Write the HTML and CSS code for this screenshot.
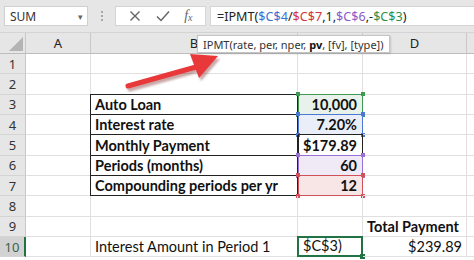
FILE: index.html
```html
<!DOCTYPE html>
<html>
<head>
<meta charset="utf-8">
<link rel="stylesheet" href="styles.css">
</head>
<body>
<div class="app">
  <div class="topbar">
    <div class="namebox"><span>SUM</span><span class="caret">&#9662;</span></div>
    <div class="grip"><i></i><i></i><i></i></div>
    <div class="fbtns">
      <svg class="ic" width="14" height="14" viewBox="0 0 14 14"><path d="M2.5 2.5 L11.5 11.5 M11.5 2.5 L2.5 11.5" stroke="#666" stroke-width="1.4" fill="none"/></svg>
      <svg class="ic" width="16" height="14" viewBox="0 0 16 14"><path d="M2 7.5 L6 11.5 L14 2.5" stroke="#666" stroke-width="1.5" fill="none"/></svg>
      <span class="fx">f<sub>x</sub></span>
    </div>
    <div class="fbar">=IPMT(<span class="cb">$C$4</span>/<span class="cr">$C$7</span>,1,<span class="cp">$C$6</span>,-<span class="cg">$C$3</span>)</div>
  </div>
  <div class="sheet">
    <div class="corner"><svg width="14" height="14" viewBox="0 0 14 14"><path d="M14 0 L14 14 L0 14 Z" fill="#b4b4b4"/></svg></div>
    <div class="ch">A</div><div class="ch">B</div><div class="ch"></div><div class="ch">D</div><div class="ch last"></div>

    <div class="rh">1</div><div class="c"></div><div class="c"></div><div class="c"></div><div class="c"></div><div class="c e"></div>
    <div class="rh">2</div><div class="c"></div><div class="c"></div><div class="c"></div><div class="c"></div><div class="c e"></div>
    <div class="rh">3</div><div class="c"></div><div class="c bx top b">Auto Loan</div><div class="c v g b r">10,000<i class="k k1"></i><i class="k k2"></i><i class="k k3"></i><i class="k k4"></i></div><div class="c"></div><div class="c e"></div>
    <div class="rh">4</div><div class="c"></div><div class="c bx b">Interest rate</div><div class="c v bl b r">7.20%<i class="k k1"></i><i class="k k2"></i><i class="k k3"></i><i class="k k4"></i></div><div class="c"></div><div class="c e"></div>
    <div class="rh">5</div><div class="c"></div><div class="c bx b">Monthly Payment</div><div class="c v bk b r">$179.89</div><div class="c"></div><div class="c e"></div>
    <div class="rh">6</div><div class="c"></div><div class="c bx b">Periods (months)</div><div class="c v pu b r">60<i class="k k1"></i><i class="k k2"></i><i class="k k3"></i><i class="k k4"></i></div><div class="c"></div><div class="c e"></div>
    <div class="rh">7</div><div class="c"></div><div class="c bx b">Compounding periods per yr</div><div class="c v rd b r">12<i class="k k1"></i><i class="k k2"></i><i class="k k3"></i><i class="k k4"></i></div><div class="c"></div><div class="c e"></div>
    <div class="rh">8</div><div class="c"></div><div class="c"></div><div class="c"></div><div class="c"></div><div class="c e"></div>
    <div class="rh">9</div><div class="c"></div><div class="c"></div><div class="c"></div><div class="c b ov">Total Payment</div><div class="c e"></div>
    <div class="rh act">10</div><div class="c"></div><div class="c">Interest Amount in Period 1</div><div class="c edit">$C$3)<i class="k k4 kg"></i></div><div class="c r">$239.89</div><div class="c e"></div>

    <div class="tip">IPMT(rate, per, nper,&nbsp;<b>pv</b>, [fv], [type])</div>
    <svg class="arrow" width="110" height="45" viewBox="0 0 110 45">
      <defs><filter id="sh" x="-20%" y="-40%" width="140%" height="180%"><feGaussianBlur stdDeviation="1.2"/></filter></defs>
      <g transform="translate(2,3)" opacity="0.35" filter="url(#sh)">
        <path d="M4 38 L72 19" stroke="#600" stroke-width="5" stroke-linecap="round"/>
        <path d="M66 6 L94 8 L75 30 Z" fill="#600"/>
      </g>
      <path d="M4 38 L72 19" stroke="#e8383a" stroke-width="5" stroke-linecap="round"/>
      <path d="M66 6 L94 8 L75 30 Z" fill="#e8383a"/>
    </svg>
  </div>
</div>
</body>
</html>
```
FILE: styles.css
```css
* { box-sizing: border-box; }
html, body { margin: 0; padding: 0; background: #fff; }
.app { width: 474px; height: 260px; overflow: hidden; font-family: "Noto Sans", "Open Sans", sans-serif; }

.topbar { height: 33px; background: #e6e6e6; display: flex; align-items: center; padding: 0 0 0 4px; border-bottom: 1px solid #d4d4d4; }
.namebox { width: 84px; height: 20px; background: #fff; border: 1px solid #d0d0d0; display: flex; align-items: center; justify-content: space-between; padding: 0 4px 0 5px; font-size: 12px; color: #333; }
.caret { font-size: 9px; color: #666; }
.grip { width: 27px; display: flex; flex-direction: column; align-items: center; gap: 2px; }
.grip i { width: 2px; height: 2px; background: #a8a8a8; display: block; }
.fbtns { width: 91px; height: 20px; background: #fff; border: 1px solid #d4d4d4; display: flex; align-items: center; justify-content: space-around; padding: 0 6px; }
.fx { font-family: "Liberation Serif", serif; font-style: italic; font-size: 14px; color: #666; line-height: 1; }
.fx sub { font-size: 10px; vertical-align: -1px; }
.fbar { flex: 1; margin-left: 4px; height: 20px; background: #fff; border: 1px solid #d4d4d4; border-right: none; display: flex; align-items: center; padding-left: 6px; font-size: 12.6px; color: #222; white-space: nowrap; }
.cb { color: #3d6fd0; }
.cr { color: #d0373c; }
.cp { color: #8a5bc8; }
.cg { color: #2f8f4a; }

.sheet { position: relative; display: grid; grid-template-columns: 26px 65px 207px 65px 104px 7px; grid-template-rows: 21px repeat(10, 20.33px); font-family: "Lato", "Liberation Sans", sans-serif; font-size: 14.5px; color: #111; }
.corner { background: #e6e6e6; border-right: 1px solid #c8c8c8; border-bottom: 1px solid #bdbdbd; display: flex; align-items: flex-end; justify-content: flex-end; padding: 0 2px 2px 0; }
.ch { background: #e6e6e6; border-right: 1px solid #c8c8c8; border-bottom: 1px solid #bdbdbd; display: flex; align-items: center; justify-content: center; font-family: "Noto Sans", sans-serif; font-size: 13px; color: #222; }
.ch.last { border-right: none; }
.rh { background: #e6e6e6; border-right: 1px solid #c8c8c8; border-bottom: 1px solid #d4d4d4; display: flex; align-items: center; justify-content: center; font-family: "Noto Sans", sans-serif; font-size: 13px; color: #333; }
.rh.act { background: #d2d2d2; border-right: 2px solid #217346; color: #3d5f4a; }
.c { position: relative; border-right: 1px solid #e0e0e0; border-bottom: 1px solid #e0e0e0; display: flex; align-items: flex-end; padding: 0 4px 1px; white-space: nowrap; line-height: 17px; }
.c.e { border-right: none; }
.b { font-weight: 700; }
.r { justify-content: flex-end; }
.ov { overflow: visible; }
.bx { border-left: 1px solid #222; border-right: 1px solid #222; border-bottom: 1px solid #222; margin-left: -1px; }
.bx.top { border-top: 1px solid #222; margin-top: -1px; }
.v { border: 1px solid #222; margin-top: -1px; padding-right: 5px; }
.g { border-color: #3e9a52; background: #e8f1ea; }
.bl { border-color: #4a78d2; background: #e9eef8; }
.bk { border-color: #222; justify-content: center; }
.pu { border-color: #9a6fd6; background: #efeaf6; }
.rd { border-color: #d1505a; background: #f8e5e6; }
.k { position: absolute; width: 4px; height: 4px; display: block; }
.g .k { background: #3e9a52; }
.bl .k { background: #4a78d2; }
.pu .k { background: #9a6fd6; }
.rd .k { background: #d1505a; }
.k1 { left: -3px; top: -3px; }
.k2 { right: -3px; top: -3px; }
.k3 { left: -3px; bottom: -3px; }
.k4 { right: -3px; bottom: -3px; }
.edit { border: 2px solid #217346; margin-top: -1px; margin-left: -1px; font-size: 14.5px; padding-left: 4px; }
.kg { background: #217346; width: 5px; height: 5px; right: -4px; bottom: -4px; }

.tip { position: absolute; left: 197px; top: 2px; height: 18px; background: #fff; border: 1px solid #c4c4c4; box-shadow: 1px 1px 2px rgba(0,0,0,0.15); font-family: "Noto Sans", sans-serif; font-size: 11px; color: #333; padding: 0 5px; display: flex; align-items: center; white-space: nowrap; }
.tip b { font-weight: 700; color: #111; }
.arrow { position: absolute; left: 124px; top: 15px; }
```
